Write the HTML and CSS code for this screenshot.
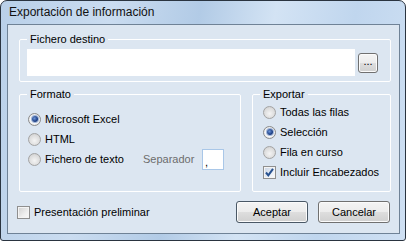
FILE: index.html
```html
<!DOCTYPE html>
<html lang="es">
<head>
  <meta charset="UTF-8" />
  <title>Exportación de información</title>
  <link rel="stylesheet" href="styles.css">
</head>
<body>
  <div class="window">
    <div class="titlebar">Exportación de información</div>
    <div class="client">
      <fieldset class="group group-file">
        <legend>Fichero destino</legend>
        <div class="file-row">
          <input type="text" class="file-input" />
          <button class="browse">...</button>
        </div>
      </fieldset>

      <div class="group-row">
        <fieldset class="group group-format">
          <legend>Formato</legend>
          <div class="option-list">
            <div class="option"><span class="radio checked"></span>Microsoft Excel</div>
            <div class="option"><span class="radio"></span>HTML</div>
            <div class="option">
              <span class="text-option"><span class="radio"></span>Fichero de texto</span>
              <span class="sep-label">Separador</span>
              <input type="text" class="sep-input" value="," />
            </div>
          </div>
        </fieldset>

        <fieldset class="group group-export">
          <legend>Exportar</legend>
          <div class="option-list">
            <div class="option"><span class="radio"></span>Todas las filas</div>
            <div class="option"><span class="radio checked"></span>Selección</div>
            <div class="option"><span class="radio"></span>Fila en curso</div>
            <div class="option">
              <span class="checkbox checked">
                <svg width="11" height="11" viewBox="0 0 11 11"><path d="M2 5.5 L4.3 8.3 L9 1.8" fill="none" stroke="#27518f" stroke-width="2"/></svg>
              </span>Incluir Encabezados
            </div>
          </div>
        </fieldset>
      </div>

      <div class="footer">
        <div class="option"><span class="checkbox"></span>Presentación preliminar</div>
        <div class="buttons">
          <button class="btn default">Aceptar</button>
          <button class="btn">Cancelar</button>
        </div>
      </div>
    </div>
  </div>
</body>
</html>
```

FILE: styles.css
```css
body {
  margin: 0;
  font-family: 'Liberation Sans', Arial, sans-serif;
  font-size: 11px;
  color: #000;
}

.window {
  box-sizing: border-box;
  width: 406px;
  height: 241px;
  border: 1px solid #2a3440;
  border-radius: 7px 7px 3px 3px;
  padding: 0 5px 6px 6px;
  background: linear-gradient(100deg, #b9d0e9 0%, #cadcf0 25%, #b2cbe6 45%, #d3e3f4 62%, #c0d6ee 80%, #cfe0f3 100%);
  display: flex;
  flex-direction: column;
}

.titlebar {
  height: 23px;
  line-height: 22px;
  padding-left: 2px;
  font-size: 12px;
  color: #111;
}

.client {
  flex: 1;
  border: 1px solid #6f8296;
  background: #dce6f1;
  display: flex;
  flex-direction: column;
}

.group {
  margin: 0;
  padding: 0;
  min-width: 0;
  border: 1px solid #fff;
  border-radius: 2px;
  box-sizing: border-box;
}

.group legend {
  margin-left: 7px;
  padding: 0 3px;
  line-height: 13px;
}

.group-file {
  margin: 8px 8px 0 11px;
}

.file-row {
  display: flex;
  align-items: center;
  padding: 3px 0 5px 7px;
}

.file-input {
  box-sizing: border-box;
  width: 328px;
  height: 27px;
  margin: 0;
  border: 1px solid #fff;
  background: #fff;
}

.browse {
  box-sizing: border-box;
  width: 20px;
  height: 20px;
  margin-left: 3px;
  padding: 0 0 3px;
  border: 1px solid #707070;
  border-radius: 3px;
  background: linear-gradient(#f4f4f4 0%, #ececec 50%, #dedede 50%, #d0d0d0 100%);
  box-shadow: inset 0 0 0 1px #fbfbfb;
  font-family: 'Liberation Sans', Arial, sans-serif;
  font-size: 11px;
  line-height: 14px;
  vertical-align: bottom;
}

.group-row {
  display: flex;
  gap: 11px;
  margin: 6px 8px 0 11px;
}

.group-format {
  width: 222px;
  height: 104px;
}

.group-export {
  flex: 1;
  height: 104px;
}

.option-list {
  display: flex;
  flex-direction: column;
}

.group-format .option-list {
  padding: 8px 0 0 8px;
}

.group-export .option-list {
  padding: 1px 0 0 10px;
}

.option {
  display: flex;
  align-items: center;
  height: 20px;
}

.text-option {
  display: flex;
  align-items: center;
  width: 115px;
}

.radio {
  box-sizing: border-box;
  width: 13px;
  height: 13px;
  margin-right: 4px;
  border: 1px solid #a3a3a3;
  border-radius: 50%;
  background: radial-gradient(circle at 50% 60%, #f4f4f4 0%, #dcdcdc 60%, #c9c9c9 100%);
  display: flex;
  align-items: center;
  justify-content: center;
}

.radio.checked {
  border-color: #8a8a8a;
  background: radial-gradient(circle, #ffffff 40%, #d6d6d6 100%);
}

.radio.checked::after {
  content: "";
  width: 6px;
  height: 6px;
  border-radius: 50%;
  background: radial-gradient(circle at 40% 40%, #6d95d6 0%, #1c3f86 60%, #15306a 100%);
  box-shadow: 0 0 0 1px #9fb5d8;
}

.checkbox {
  box-sizing: border-box;
  width: 13px;
  height: 13px;
  margin-right: 4px;
  border: 1px solid #8f8f8f;
  background: linear-gradient(135deg, #cfcfcf 0%, #eeeeee 60%, #fafafa 100%);
  box-shadow: inset 0 0 0 1px #f4f4f4;
  display: flex;
  align-items: center;
  justify-content: center;
}

.checkbox.checked {
  background: linear-gradient(135deg, #c8d4e4 0%, #eef2f8 70%, #fafafa 100%);
}

.sep-label {
  color: #6d6d6d;
  width: 59px;
}

.sep-input {
  box-sizing: border-box;
  width: 22px;
  height: 21px;
  margin: 0;
  padding: 6px 0 0 2px;
  border: 1px solid #a9c7e8;
  background: #fff;
  font-family: 'Liberation Sans', Arial, sans-serif;
  font-size: 11px;
}

.footer {
  display: flex;
  align-items: center;
  justify-content: space-between;
  margin: 9px 9px 0 9px;
}

.buttons {
  display: flex;
  gap: 10px;
}

.btn {
  box-sizing: border-box;
  width: 72px;
  height: 22px;
  border: 1px solid #707070;
  border-radius: 3px;
  background: linear-gradient(#f4f4f4 0%, #ececec 50%, #dedede 50%, #d0d0d0 100%);
  box-shadow: inset 0 0 0 1px #fbfbfb;
  font-family: 'Liberation Sans', Arial, sans-serif;
  font-size: 11px;
  color: #000;
}

.btn.default {
  border-color: #4a5866;
}
```
